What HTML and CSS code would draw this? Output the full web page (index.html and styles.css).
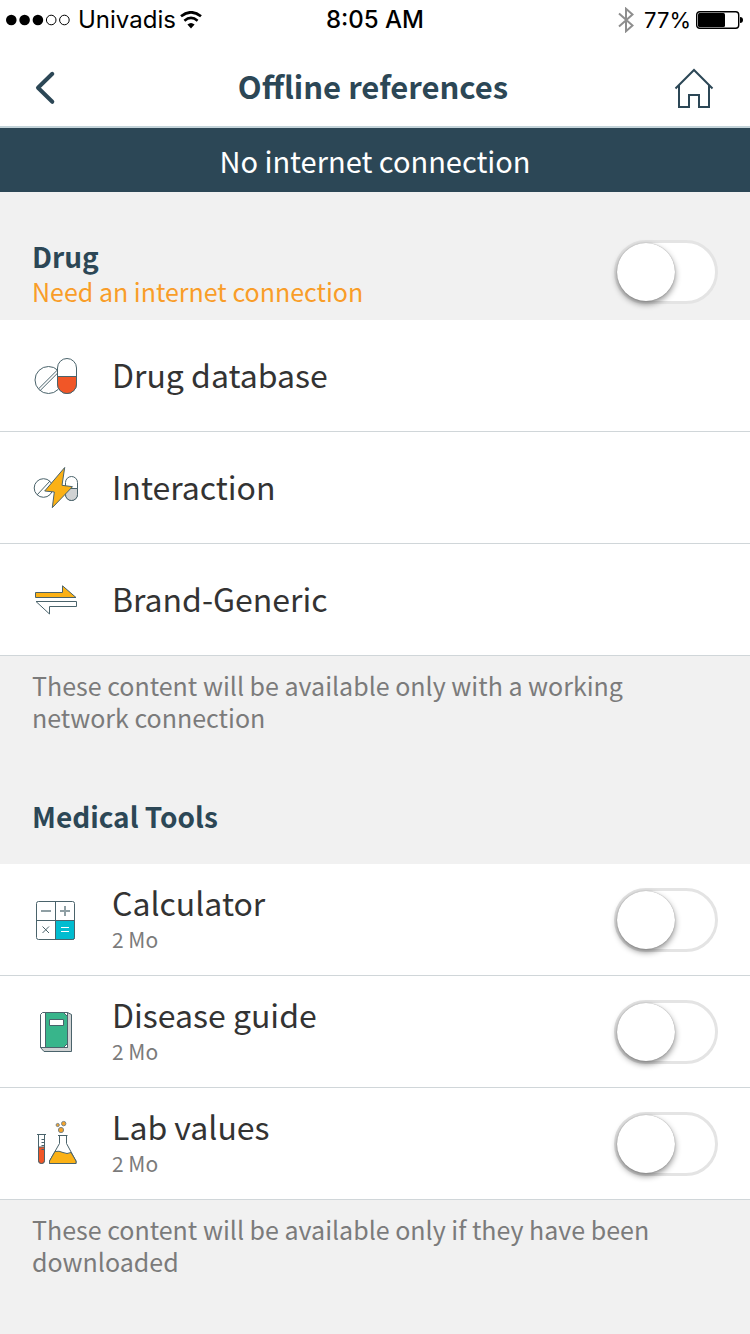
FILE: index.html
```html
<!DOCTYPE html>
<html lang="en">
<head>
<meta charset="utf-8">
<meta name="viewport" content="width=device-width, initial-scale=1">
<title>Offline references</title>
<link rel="stylesheet" href="styles.css">
</head>
<body>
<div class="status">
  <div class="status-left">
    <svg class="signal" width="64" height="12" viewBox="0 0 64 12" aria-hidden="true">
      <circle cx="5.3" cy="6" r="5.3"/><circle cx="18.6" cy="6" r="5.3"/><circle cx="31.9" cy="6" r="5.3"/>
      <g fill="none" stroke="#000"><circle cx="45.2" cy="6" r="4.8"/><circle cx="58.4" cy="6" r="4.8"/></g>
    </svg>
    <span>Univadis</span>
    <svg width="22" height="18" viewBox="0 0 22 18" aria-hidden="true">
      <path d="M1 5.2Q11-2.6 21 5.2" fill="none" stroke="#000" stroke-width="2.7"/>
      <path d="M4.4 9.7Q11 4 17.6 9.7" fill="none" stroke="#000" stroke-width="2.6"/>
      <path d="M7.4 13.4Q11 10.4 14.6 13.4L11 17.4Z"/>
    </svg>
  </div>
  <time class="clock">8:05 AM</time>
  <div class="status-right">
    <svg width="16" height="26" viewBox="0 0 16 26" fill="none" stroke="#8e8e8e" stroke-width="2" aria-hidden="true">
      <path d="M1 6.5L14.5 18.5L8 24.2V1.8L14.5 7.5L1 19.5"/>
    </svg>
    <span class="percent">77%</span>
    <svg width="48" height="18" viewBox="0 0 48 18" aria-hidden="true">
      <rect x=".7" y=".7" width="42" height="16.6" rx="3" fill="#fff" stroke="#000" stroke-width="1.4"/>
      <rect x="2" y="2" width="27" height="14" rx="1.5"/>
      <path d="M44 6Q47 6 47 9T44 12Z"/>
    </svg>
  </div>
</div>
<header class="nav">
  <button class="nav-button" type="button" aria-label="Back">
    <svg width="40" height="40" viewBox="0 0 40 40" fill="none" stroke="#2c4756" stroke-width="4" stroke-linecap="round" stroke-linejoin="round"><path d="M20.3 5.8L6 19.8L20.3 33.8"/></svg>
  </button>
  <h1 class="title">Offline references</h1>
  <button class="nav-button" type="button" aria-label="Home">
    <svg width="40" height="40" viewBox="0 0 40 40" fill="none" stroke="#2c4756" stroke-width="2"><path d="M1.5 20.5L20 2L38.5 20.5M5 17.5V39H15V27H25V39H35V17.5"/></svg>
  </button>
</header>
<p class="banner">No internet connection</p>
<main>
  <section>
    <div class="section-head">
      <div class="section-text">
        <h2 class="section-title"><label for="drug">Drug</label></h2>
        <p class="warning">Need an internet connection</p>
      </div>
      <input class="switch" type="checkbox" role="switch" id="drug">
    </div>
    <ul class="list">
      <li class="row">
        <svg class="icon" viewBox="0 0 48 48" aria-hidden="true">
          <circle cx="16.5" cy="28" r="13.5"/>
          <path d="M6.7 36.7L25.4 18M8.3 38.4L26 20.7"/>
          <rect x="25.5" y="6.5" width="19" height="35" rx="9.5"/>
          <path class="red" d="M25.5 24.5H44.5V32A9.5 9.5 0 0 1 25.5 32Z"/>
        </svg>
        <span class="entry name">Drug database</span>
      </li>
      <li class="row">
        <svg class="icon" viewBox="0 0 48 48" aria-hidden="true">
          <circle cx="11.5" cy="24" r="9.3"/>
          <path d="M5 31L18 17"/>
          <rect x="33.5" y="12.5" width="12" height="24" rx="6"/>
          <path class="grey" d="M33.5 24.5H45.5V30.5A6 6 0 0 1 33.5 30.5Z"/>
          <path class="yellow" d="M32.7 3.5L12.7 27L22.3 28L20.3 43.7L40.5 22.7L30 21.3Z"/>
        </svg>
        <span class="entry name">Interaction</span>
      </li>
      <li class="row">
        <svg class="icon" viewBox="0 0 48 48" aria-hidden="true">
          <path class="yellow" d="M3.5 21.5V16.5H30.5V9.8L44 21.5Z"/>
          <path d="M4 25.5H44.5V30.5H17.5V38Z"/>
        </svg>
        <span class="entry name">Brand-Generic</span>
      </li>
    </ul>
    <p class="note">These content will be available only with a working network connection</p>
  </section>
  <section>
    <h2 class="section-title section-title-alone">Medical Tools</h2>
    <ul class="list">
      <li class="row">
        <svg class="icon" viewBox="0 0 48 48" aria-hidden="true">
          <rect x="4.5" y="5.5" width="38" height="38" rx="2"/>
          <path class="cyan" d="M23.5 24.5H42.5V41.5A2 2 0 0 1 40.5 43.5H23.5Z"/>
          <path d="M23.5 5.5V43.5M4.5 24.5H42.5M10.5 30.5L17 37M17 30.5L10.5 37"/>
          <path d="M9 15H19M28 15H38M33 10V20" stroke="#8f9fa4" stroke-width="2"/>
          <path d="M29 31.5H37M29 35.5H37" stroke="#fff"/>
        </svg>
        <div class="entry entry-sized">
          <label class="name" for="calculator">Calculator</label>
          <span class="size">2 Mo</span>
        </div>
        <input class="switch" type="checkbox" role="switch" id="calculator">
      </li>
      <li class="row">
        <svg class="icon" viewBox="0 0 48 48" aria-hidden="true">
          <path class="grey" d="M8.5 39.5L12 43.5H39.5V6.5L35.5 4.5V39.5Z"/>
          <path d="M8.5 39.5V6.5L10.5 4.5H13.5V39.5Z"/>
          <path class="green" d="M13.5 4.5H35.5V39.5H13.5Z"/>
          <path d="M17.5 11.5H31.5V17.5H17.5ZM31.5 4.5L35.5 8.5V4.5ZM31.5 39.5L35.5 35.5V39.5Z"/>
        </svg>
        <div class="entry entry-sized">
          <label class="name" for="disease">Disease guide</label>
          <span class="size">2 Mo</span>
        </div>
        <input class="switch" type="checkbox" role="switch" id="disease">
      </li>
      <li class="row">
        <svg class="icon" viewBox="0 0 48 48" aria-hidden="true">
          <path d="M6.5 14.5V40.5A3 3 0 0 0 12.5 40.5V14.5"/>
          <path class="red" d="M6.5 27H12.5V40.5A3 3 0 0 1 6.5 40.5Z"/>
          <path d="M5 14.5H14M9.5 19.5H12.5M9.5 22.5H12.5M9.5 25.5H12.5M9.5 29.5H12.5"/>
          <path d="M27.5 15.5V23.5L17.5 41V43.5H44V41L34.5 23.5V15.5"/>
          <path class="yellow" d="M23 31.5Q27 30.5 31 32.5T39 32.5L44 41V43.5H17.5V41Z"/>
          <path d="M26 15.5H35.5"/>
          <g fill="#f3a32b" stroke="#7c8585"><circle cx="25.7" cy="5" r="1.6"/><circle cx="31.7" cy="3.6" r="2.2"/><circle cx="29" cy="10" r="2.6"/></g>
        </svg>
        <div class="entry entry-sized">
          <label class="name" for="lab">Lab values</label>
          <span class="size">2 Mo</span>
        </div>
        <input class="switch" type="checkbox" role="switch" id="lab">
      </li>
    </ul>
    <p class="note">These content will be available only if they have been downloaded</p>
  </section>
</main>
</body>
</html>
```
FILE: styles.css
```css
* { box-sizing: border-box; }

body {
  margin: 0;
  min-height: 100vh;
  background: #f1f1f1;
  color: #333;
  font-family: "Noto Sans CJK SC", "Noto Sans", sans-serif;
}

h1, h2, p, ul { margin: 0; padding: 0; }

.status {
  display: grid;
  grid-template-columns: 1fr auto 1fr;
  align-items: center;
  height: 40px;
  padding: 0 6px;
  background: #fff;
  color: #000;
  font: 24px/40px Inter, sans-serif;
}

.status-left, .status-right { display: flex; align-items: center; }
.status-left { gap: 4px; }
.signal { margin-right: 4px; }
.status-right { justify-content: flex-end; gap: 5px; }
.percent { margin-left: 5px; font-size: 22px; }
.clock { font-weight: 500; }

.nav {
  display: flex;
  align-items: center;
  justify-content: space-between;
  height: 88px;
  padding: 10px 36px 0 32px;
  border-bottom: 2px solid #c3d3d9;
  background: #fff;
}

.nav-button {
  padding: 0;
  border: 0;
  background: none;
}

.nav-button svg { display: block; }

.title {
  padding-bottom: 4px;
  color: #2c4756;
  font-size: 31px;
  line-height: 40px;
  font-weight: 700;
}

.banner {
  background: #2c4756;
  color: #fff;
  font-size: 29px;
  line-height: 64px;
  text-align: center;
}

.section-head {
  display: flex;
  align-items: center;
  justify-content: space-between;
  min-height: 128px;
  padding: 32px 32px 0;
}

.section-text { padding-top: 2px; }

.section-title {
  color: #2c4756;
  font-size: 28px;
  line-height: 36px;
  font-weight: 700;
}

.section-title-alone { padding: 64px 32px 30px; }

.warning {
  color: #f99d28;
  font-size: 25px;
  line-height: 34px;
}

.list { list-style: none; }

.row {
  display: flex;
  align-items: center;
  gap: 32px;
  min-height: 112px;
  padding: 0 32px;
  border-bottom: 1px solid #d0d6d9;
  background: #fff;
}

.icon {
  flex: none;
  width: 48px;
  height: 48px;
  fill: #fff;
  stroke: #4a636b;
}

.red { fill: #f15627; }
.yellow { fill: #fbb116; }
.grey { fill: #d0d2d3; }
.cyan { fill: #00bcd0; }
.green { fill: #38b58b; }

.entry {
  flex: 1;
  padding-bottom: 4px;
}

.entry-sized {
  display: flex;
  flex-direction: column;
  padding-bottom: 6px;
}

.name {
  font-size: 32px;
  line-height: 44px;
}

.size {
  color: #7b7b7b;
  font-size: 21px;
  line-height: 30px;
}

.note {
  padding: 13px 80px 1px 32px;
  color: #7b7b7b;
  font-size: 25px;
  line-height: 32px;
}

.switch {
  flex: none;
  appearance: none;
  width: 104px;
  height: 64px;
  margin: 0;
  border: 3px solid #e4e4e4;
  border-radius: 32px;
  background: #fff;
}

.switch::before {
  content: "";
  display: block;
  width: 58px;
  height: 58px;
  border-radius: 50%;
  background: #fff;
  box-shadow: 0 0 1px rgba(0, 0, 0, .4), 0 3px 6px rgba(0, 0, 0, .45);
}

.switch:checked { background: #38b58b; }
.switch:checked::before { margin-left: 40px; }
```
